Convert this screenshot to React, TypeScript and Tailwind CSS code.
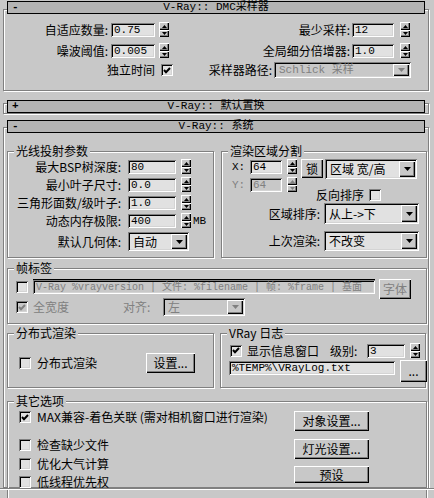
import React from "react";

const F = "font-['Noto_Sans_CJK_SC','Noto_Sans',sans-serif]";
const MONO = "font-['Liberation_Mono','Noto_Sans_CJK_SC',monospace]";
const ETCH = "border border-[#808080] shadow-[inset_1px_1px_0_#fff,1px_1px_0_#fff]";
const SUNK =
  "shadow-[inset_1px_1px_0_#808080,inset_-1px_-1px_0_#fff,inset_2px_2px_0_#000,inset_-2px_-2px_0_#d4d4d4]";
const RAISED =
  "shadow-[inset_1px_1px_0_#fff,inset_-1px_-1px_0_#000,inset_-2px_-2px_0_#808080]";

function Field({ cls, value, disabled }: { cls: string; value: string; disabled?: boolean }) {
  return (
    <div
      className={`${cls} ${SUNK} ${disabled ? "bg-[#c8c8c8] text-[#808080]" : "bg-[#e1e1e1] text-black"} ${MONO} shrink-0 whitespace-nowrap pl-[3px] pt-[2px] leading-[11px]`}
    >
      {value}
    </div>
  );
}

function Spinner({ disabled }: { disabled?: boolean }) {
  const c = disabled ? "#808080" : "#000";
  return (
    <div className="flex h-[15px] w-[10px] shrink-0 flex-col bg-[#c8c8c8]">
      <div className={`flex h-[8px] items-center justify-center ${RAISED}`}>
        <svg width="5" height="3" viewBox="0 0 5 3">
          <path d="M2.5 0L5 3H0z" fill={c} />
        </svg>
      </div>
      <div className={`flex h-[7px] items-center justify-center ${RAISED}`}>
        <svg width="5" height="3" viewBox="0 0 5 3">
          <path d="M0 0H5L2.5 3z" fill={c} />
        </svg>
      </div>
    </div>
  );
}

function Check({ checked, disabled }: { checked?: boolean; disabled?: boolean }) {
  return (
    <div
      className={`flex h-[12px] w-[12px] shrink-0 items-center justify-center ${SUNK} ${disabled ? "bg-[#c8c8c8]" : "bg-[#e1e1e1]"}`}
    >
      {checked && (
        <svg width="8" height="7" viewBox="0 0 8 7">
          <path d="M1 3L3 5.2L7 1" fill="none" stroke={disabled ? "#808080" : "#000"} strokeWidth="2" />
        </svg>
      )}
    </div>
  );
}

function Combo({ cls, text, disabled }: { cls: string; text: string; disabled?: boolean }) {
  return (
    <div
      className={`${cls} ${SUNK} ${disabled ? "bg-[#c8c8c8] text-[#808080]" : "bg-[#e1e1e1] text-black"} flex shrink-0 items-stretch p-[2px]`}
    >
      <div className="flex flex-1 items-center whitespace-nowrap pl-[3px]">{text}</div>
      <div className={`flex w-[16px] items-center justify-center bg-[#c8c8c8] ${RAISED}`}>
        <svg width="7" height="4" viewBox="0 0 7 4">
          <path d="M0 0H7L3.5 4z" fill={disabled ? "#808080" : "#000"} />
        </svg>
      </div>
    </div>
  );
}

function Btn({ cls, children, disabled }: { cls: string; children: React.ReactNode; disabled?: boolean }) {
  return (
    <div
      className={`${cls} ${RAISED} flex shrink-0 items-center justify-center bg-[#c8c8c8] ${disabled ? "text-[#808080]" : "text-black"}`}
    >
      {children}
    </div>
  );
}

function Header({ sign, title, cls }: { sign: string; title: string; cls: string }) {
  return (
    <div className={`${cls} mx-[3px] flex h-[13px] items-center border border-black bg-[#b4b4b4] ${MONO} text-[11px] leading-[11px]`}>
      <div className="w-[16px] pl-[4px] font-bold">{sign}</div>
      <div className="flex-1 text-center">{title}</div>
      <div className="w-[16px]" />
    </div>
  );
}

function Group({ cls, title, children }: { cls: string; title: string; children?: React.ReactNode }) {
  return (
    <div className={`${cls} ${ETCH} shrink-0`}>
      <div className="-mt-[8px] ml-[6px] h-[14px] w-fit bg-[#c8c8c8] px-[2px] leading-[14px]">{title}</div>
      {children}
    </div>
  );
}

export default function App() {
  return (
    <div
      className={`h-[498px] w-[434px] overflow-hidden bg-[#c8c8c8] pl-[3px] pt-[9px] text-[12px] leading-[14px] text-black ${F}`}
    >
      {/* DMC sampler rollout */}
      <div className={`h-[82px] w-[426px] ${ETCH}`}>
        <Header cls="-mt-[9px]" sign="-" title="V-Ray:: DMC采样器" />
        <div className="mt-[8px] flex h-[15px] items-center">
          <div className="w-[104px] text-right">自适应数量:</div>
          <div className="ml-[3px]">
            <Field cls="w-[44px] h-[14px] text-[11px]" value="0.75" />
          </div>
          <div className="ml-[4px]">
            <Spinner />
          </div>
          <div className="w-[181px] text-right">最少采样:</div>
          <div className="ml-[2px]">
            <Field cls="w-[42px] h-[14px] text-[11px]" value="12" />
          </div>
          <div className="ml-[6px]">
            <Spinner />
          </div>
        </div>
        <div className="mt-[6px] flex h-[15px] items-center">
          <div className="w-[104px] text-right">噪波阈值:</div>
          <div className="ml-[3px]">
            <Field cls="w-[44px] h-[14px] text-[11px]" value="0.005" />
          </div>
          <div className="ml-[4px]">
            <Spinner />
          </div>
          <div className="w-[181px] text-right">全局细分倍增器:</div>
          <div className="ml-[2px]">
            <Field cls="w-[42px] h-[14px] text-[11px]" value="1.0" />
          </div>
          <div className="ml-[6px]">
            <Spinner />
          </div>
        </div>
        <div className="mt-[4px] flex h-[16px] items-center">
          <div className="w-[151px] text-right">独立时间</div>
          <div className="ml-[6px]">
            <Check checked />
          </div>
          <div className="w-[99px] text-right">采样器路径:</div>
          <div className="ml-[2px]">
            <Combo cls={`w-[137px] h-[16px] ${MONO} text-[11px]`} text="Schlick 采样" disabled />
          </div>
        </div>
      </div>

      {/* Displacement (collapsed) */}
      <div className={`mt-[12px] h-[11px] w-[426px] ${ETCH}`}>
        <Header cls="-mt-[4px]" sign="+" title="V-Ray:: 默认置换" />
      </div>

      {/* System rollout */}
      <div className={`mt-[13px] h-[361px] w-[426px] ${ETCH}`}>
        <Header cls="-mt-[8px]" sign="-" title="V-Ray:: 系统" />

        <div className="mt-[18px] flex">
          <Group cls="ml-[3px] w-[207px] h-[107px]" title="光线投射参数">
            {[
              ["最大BSP树深度:", "80"],
              ["最小叶子尺寸:", "0.0"],
              ["三角形面数/级叶子:", "1.0"],
              ["动态内存极限:", "400"],
            ].map(([l, v], i) => (
              <div key={l} className={`${i === 0 ? "mt-[1px]" : "mt-[3px]"} flex h-[15px] items-center`}>
                <div className="w-[113px] whitespace-nowrap text-right">{l}</div>
                <div className="ml-[7px]">
                  <Field cls="w-[48px] h-[14px] text-[11px]" value={v} />
                </div>
                <div className="ml-[5px]">
                  <Spinner />
                </div>
                {i === 3 && <div className={`ml-[2px] ${MONO} text-[11px]`}>MB</div>}
              </div>
            ))}
            <div className="mt-[4px] flex h-[19px] items-center">
              <div className="w-[113px] text-right">默认几何体:</div>
              <div className="ml-[7px]">
                <Combo cls="w-[61px] h-[19px]" text="自动" />
              </div>
            </div>
          </Group>

          <Group cls="ml-[7px] w-[206px] h-[107px]" title="渲染区域分割">
            <div className="mt-[1px] flex items-start">
              <div className="flex flex-col">
                <div className="flex h-[15px] items-center">
                  <div className={`ml-[10px] w-[18px] ${MONO} text-[11px]`}>X:</div>
                  <Field cls="w-[32px] h-[14px] text-[11px]" value="64" />
                  <div className="ml-[5px]">
                    <Spinner />
                  </div>
                </div>
                <div className="mt-[3px] flex h-[15px] items-center">
                  <div className={`ml-[10px] w-[18px] ${MONO} text-[11px] text-[#808080]`}>Y:</div>
                  <Field cls="w-[32px] h-[14px] text-[11px]" value="64" disabled />
                  <div className="ml-[5px]">
                    <Spinner disabled />
                  </div>
                </div>
              </div>
              <div className="ml-[4px] flex flex-col">
                <div className="flex items-start">
                  <Btn cls="w-[22px] h-[19px]">锁</Btn>
                  <div className="ml-[2px]">
                    <Combo cls="w-[92px] h-[20px]" text="区域 宽/高" />
                  </div>
                </div>
                <div className="mt-[10px] flex h-[12px] items-center">
                  <div className="ml-[15px]">反向排序</div>
                  <div className="ml-[5px]">
                    <Check />
                  </div>
                </div>
              </div>
            </div>
            <div className="mt-[2px] flex h-[21px] items-center">
              <div className="w-[98px] text-right">区域排序:</div>
              <div className="ml-[4px]">
                <Combo cls="w-[95px] h-[21px]" text="从上->下" />
              </div>
            </div>
            <div className="mt-[7px] flex h-[20px] items-center">
              <div className="w-[98px] text-right">上次渲染:</div>
              <div className="ml-[4px]">
                <Combo cls="w-[95px] h-[20px]" text="不改变" />
              </div>
            </div>
          </Group>
        </div>

        {/* Frame stamp */}
        <Group cls="ml-[3px] mt-[10px] w-[420px] h-[56px]" title="帧标签">
          <div className="mt-[4px] flex h-[19px] items-start">
            <div className="ml-[8px] mt-[2px]">
              <Check />
            </div>
            <div className="ml-[5px]">
              <Field
                cls="w-[342px] h-[15px] text-[10px] border-t border-black"
                value="V-Ray %vrayversion | 文件: %filename | 帧: %frame | 基面"
                disabled
              />
            </div>
            <div className="ml-[4px]">
              <Btn cls="w-[32px] h-[20px]" disabled>
                字体
              </Btn>
            </div>
          </div>
          <div className="flex h-[18px] items-center text-[#808080]">
            <div className="ml-[8px]">
              <Check checked disabled />
            </div>
            <div className="ml-[5px] w-[90px]">全宽度</div>
            <div className="w-[40px]">对齐:</div>
            <Combo cls="w-[82px] h-[18px]" text="左" disabled />
          </div>
        </Group>

        <div className="mt-[9px] flex">
          <Group cls="ml-[3px] w-[207px] h-[55px]" title="分布式渲染">
            <div className="mt-[13px] flex h-[20px] items-center">
              <div className="ml-[11px]">
                <Check />
              </div>
              <div className="ml-[6px] w-[60px]">分布式渲染</div>
              <div className="ml-[49px]">
                <Btn cls="w-[49px] h-[20px]">设置...</Btn>
              </div>
            </div>
          </Group>
          <Group cls="ml-[6px] w-[206px] h-[55px]" title="VRay 日志">
            <div className="mt-[3px] flex h-[15px] items-center">
              <div className="ml-[9px]">
                <Check checked />
              </div>
              <div className="ml-[5px] w-[72px] whitespace-nowrap">显示信息窗口</div>
              <div className="ml-[11px] w-[30px]">级别:</div>
              <div className="ml-[7px]">
                <Field cls="w-[38px] h-[14px] text-[11px]" value="3" />
              </div>
              <div className="ml-[5px]">
                <Spinner />
              </div>
            </div>
            <div className="mt-[3px] flex items-start">
              <div className="ml-[8px]">
                <Field cls="w-[166px] h-[14px] text-[11px]" value="%TEMP%\VRayLog.txt" />
              </div>
              <div className="-mt-[1px] ml-[5px]">
                <Btn cls="w-[27px] h-[22px]">...</Btn>
              </div>
            </div>
          </Group>
        </div>

        <Group cls="ml-[3px] mt-[13px] w-[420px] h-[120px]" title="其它选项">
          <div className="flex">
            <div className="flex w-[286px] flex-col">
              <div className="mt-[3px] flex h-[12px] items-center">
                <div className="ml-[11px]">
                  <Check checked />
                </div>
                <div className="ml-[6px] whitespace-nowrap">MAX兼容-着色关联 (需对相机窗口进行渲染)</div>
              </div>
              <div className="mt-[16px] flex h-[12px] items-center">
                <div className="ml-[11px]">
                  <Check />
                </div>
                <div className="ml-[6px]">检查缺少文件</div>
              </div>
              <div className="mt-[7px] flex h-[12px] items-center">
                <div className="ml-[11px]">
                  <Check />
                </div>
                <div className="ml-[6px]">优化大气计算</div>
              </div>
              <div className="mt-[6px] flex h-[12px] items-center">
                <div className="ml-[11px]">
                  <Check />
                </div>
                <div className="ml-[6px]">低线程优先权</div>
              </div>
            </div>
            <div className="flex flex-col">
              <div className="mt-[3px]">
                <Btn cls="w-[75px] h-[20px]">对象设置...</Btn>
              </div>
              <div className="mt-[8px]">
                <Btn cls="w-[75px] h-[20px]">灯光设置...</Btn>
              </div>
              <div className="mt-[7px]">
                <Btn cls="w-[75px] h-[17px]">预设</Btn>
              </div>
            </div>
          </div>
        </Group>
      </div>
      <div className="-ml-[3px] h-[2px] w-[434px] border-t border-[#808080] border-b border-b-white" />
    </div>
  );
}
